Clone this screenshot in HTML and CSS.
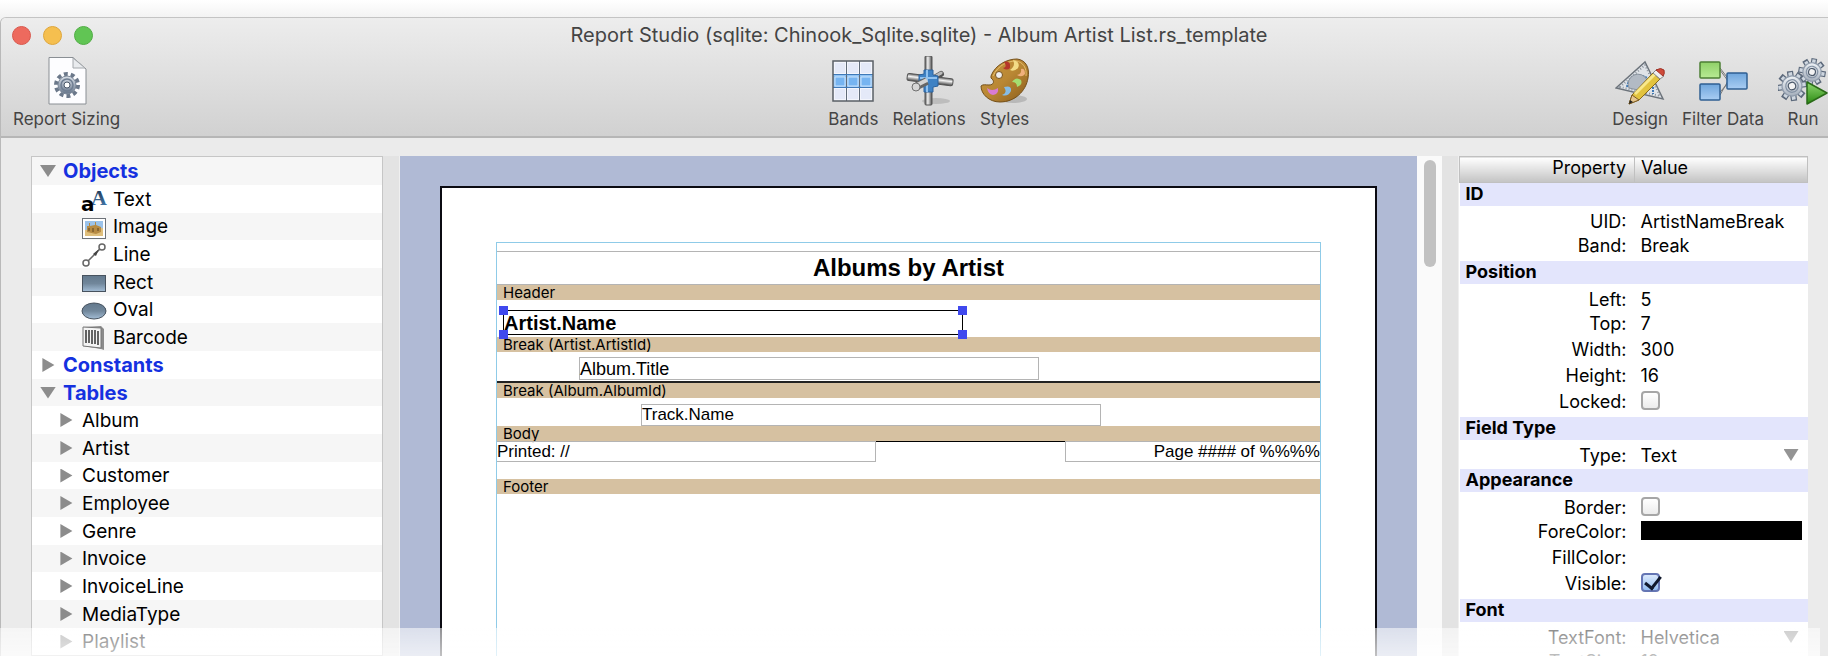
FILE: index.html
```html
<!DOCTYPE html>
<html lang="en">
    <head>
        <meta charset="utf-8">
        <title>Report Studio</title>
        <link rel="stylesheet" href="styles.css">
    </head>
    <body>
        <!-- shared gradients and the gear shape -->
        <svg class="defs" width="0" height="0" aria-hidden="true">
            <defs>
                <linearGradient id="steel" x1="0" y1="0" x2="0" y2="1">
                    <stop offset="0" stop-color="#dbe1e9"/>
                    <stop offset="1" stop-color="#66758a"/>
                </linearGradient>
                <linearGradient id="silver" x1="0" y1="0" x2="0" y2="1">
                    <stop offset="0" stop-color="#eef2f6"/>
                    <stop offset="1" stop-color="#a5afbc"/>
                </linearGradient>
                <linearGradient id="shape" x1="0" y1="0" x2="0" y2="1">
                    <stop offset="0" stop-color="#62788c"/>
                    <stop offset="0.5" stop-color="#71879b"/>
                    <stop offset="1" stop-color="#a3bdd6"/>
                </linearGradient>
                <linearGradient id="tube" x1="0" y1="0" x2="1" y2="0">
                    <stop offset="0" stop-color="#555"/>
                    <stop offset="0.4" stop-color="#f2f2f2"/>
                    <stop offset="1" stop-color="#4c4c4c"/>
                </linearGradient>
                <linearGradient id="tube-flat" x1="0" y1="0" x2="0" y2="1">
                    <stop offset="0" stop-color="#666"/>
                    <stop offset="0.4" stop-color="#f4f4f4"/>
                    <stop offset="1" stop-color="#444"/>
                </linearGradient>
                <linearGradient id="blue" x1="0" y1="0" x2="0" y2="1">
                    <stop offset="0" stop-color="#6fa6dc"/>
                    <stop offset="1" stop-color="#a9cdf3"/>
                </linearGradient>
                <linearGradient id="green" x1="0" y1="0" x2="0" y2="1">
                    <stop offset="0" stop-color="#8fd068"/>
                    <stop offset="1" stop-color="#b8ea94"/>
                </linearGradient>
                <linearGradient id="play" x1="0" y1="0" x2="0" y2="1">
                    <stop offset="0" stop-color="#8fd870"/>
                    <stop offset="1" stop-color="#2b8a12"/>
                </linearGradient>
                <linearGradient id="wood" x1="0" y1="0" x2="1" y2="1">
                    <stop offset="0" stop-color="#c9983f"/>
                    <stop offset="0.5" stop-color="#b98734"/>
                    <stop offset="1" stop-color="#8a5c1c"/>
                </linearGradient>
                <linearGradient id="ink" x1="0" y1="0" x2="0" y2="1">
                    <stop offset="0" stop-color="#16263c"/>
                    <stop offset="1" stop-color="#4a86bd"/>
                </linearGradient>
                <g id="gear">
                    <path d="M0-12V12M-12 0H12M-8-9L8 9M8-9L-8 9" stroke="#5d6a7c" stroke-width="5"/>
                    <path d="M0-11V11M-11 0H11M-7-8L7 8M7-8L-7 8" stroke="#cfd7e0" stroke-width="3"/>
                    <circle r="8" fill="url(#silver)" stroke="#8f9bab"/>
                    <circle r="5" fill="none" stroke="#8593a5"/>
                    <circle r="3" fill="#f3f3f3" stroke="#4d5a6b"/>
                </g>
            </defs>
        </svg>

        <div class="window">
            <header class="chrome">
                <div class="titlebar">
                    <div class="lights">
                        <button class="light close" aria-label="Close"></button>
                        <button class="light minimize" aria-label="Minimize"></button>
                        <button class="light maximize" aria-label="Maximize"></button>
                    </div>
                    <h1 class="title">Report Studio (sqlite: Chinook_Sqlite.sqlite) - Album Artist List.rs_template</h1>
                </div>
                <div class="toolbar">
                    <div class="tools">
                        <button class="tool">
                            <svg width="50" height="50" viewBox="0 0 50 50">
                                <path d="M7 1.500H31L44 13V48H7Z" fill="#fdfdff" stroke="#8a8f94"/>
                                <path d="M31 2V12H43Z" fill="#e9ebee" stroke="#a4a8ac"/>
                                <g fill="none">
                                    <circle cx="25" cy="29" r="11" stroke="#6b788a" stroke-width="4" stroke-dasharray="3.900 3.010"/>
                                    <circle cx="25" cy="29" r="9" fill="url(#steel)" stroke="#7a8798"/>
                                    <circle cx="25" cy="29" r="6" stroke="#6f7e92" stroke-width="1.500"/>
                                    <circle cx="25" cy="29" r="3" fill="#fff" stroke="#4d5a6b"/>
                                </g>
                            </svg>
                            <span>Report Sizing</span>
                        </button>
                    </div>
                    <div class="tools middle">
                        <button class="tool">
                            <svg width="50" height="50" viewBox="0 0 50 50">
                                <rect x="5" y="5" width="40" height="40" fill="#f3f5fc"/>
                                <rect x="5" y="18" width="40" height="14" fill="#8fc3f5"/>
                                <path d="M7 7h10v10h-10zM20 7h10v10h-10zM33 7h10v10h-10zM7 33h10v10h-10zM20 33h10v10h-10zM33 33h10v10h-10z" fill="#e4e9f8"/>
                                <path d="M18.500 5V45M31.500 5V45M5 18.500H45M5 31.500H45" stroke="#5f6a78"/>
                                <path d="M5 18.500H45M5 31.500H45" stroke="#3f79b8"/>
                                <path d="M7 21h10v9h-10zM20 21h10v9h-10zM33 21h10v9h-10z" fill="#76b4f1" stroke="#c9e2fb"/>
                                <rect x="5" y="5" width="40" height="40" fill="none" stroke="#5a5f66" stroke-width="1.500"/>
                            </svg>
                            <span>Bands</span>
                        </button>
                        <button class="tool">
                            <svg width="50" height="50" viewBox="0 0 50 50">
                                <ellipse cx="32" cy="45" rx="14" ry="3" fill="#000" opacity="0.130"/>
                                <path d="M27 24L37 18" stroke="#555" stroke-width="6" stroke-linecap="round"/>
                                <path d="M27 23L37 17" stroke="#bbb" stroke-width="3" stroke-linecap="round"/>
                                <rect x="21" y="0" width="7" height="49" rx="1" fill="url(#tube)" stroke="#555"/>
                                <rect x="3" y="20" width="46" height="7" rx="2" fill="url(#tube-flat)" stroke="#555" transform="rotate(7 25 24)"/>
                                <path d="M20 14H29V19L34 20V30L29 31V36H20V31L15 28V19L20 18Z" fill="#3f82c4" stroke="#2c639e"/>
                                <path d="M23 14V36M16 22H33" stroke="#8fc1ef" stroke-width="2"/>
                                <path d="M23 25L13 30" stroke="#666" stroke-width="8"/>
                                <path d="M23 24L13 29" stroke="#d4d4d4" stroke-width="4"/>
                                <circle cx="12" cy="31" r="4" fill="#d6d6d6" stroke="#707070"/>
                            </svg>
                            <span>Relations</span>
                        </button>
                        <button class="tool">
                            <svg width="50" height="50" viewBox="0 0 50 50">
                                <ellipse cx="33" cy="43" rx="14" ry="4" fill="#000" opacity="0.150"/>
                                <path d="M11 20C15 9 27 3 37 3C46 4 50 12 48 22C46 35 35 46 20 46C9 46 1 38 1 30C3 28 6 29 9 29C14 29 15 25 11 22Z" fill="url(#wood)" stroke="#74501b"/>
                                <path d="M13 20C18 9 28 5 36 5C43 6 47 12 46 20" fill="none" stroke="#e3bd6c"/>
                                <circle cx="19" cy="19" r="3.500" fill="#efefef" stroke="#74501b"/>
                                <path d="M24 6Q31 4 30 12Q27 15 23 12Q28 11 24 6Z" fill="#b5372b"/>
                                <path d="M33 4Q41 6 38 12Q34 16 30 14Q36 10 33 4Z" fill="#f3dc86"/>
                                <path d="M41 13Q45 12 45 18Q42 22 37 19Q42 18 41 13Z" fill="#f0b07c"/>
                                <path d="M32 26Q36 20 41 24Q43 29 37 31Q37 26 32 26Z" fill="#a4dd70"/>
                                <path d="M24 31Q32 29 31 35Q28 41 22 39Q28 37 24 31Z" fill="#86bce6"/>
                                <path d="M7 32Q12 36 18 32Q19 38 13 39Q8 38 7 32Z" fill="#d97bd2"/>
                            </svg>
                            <span>Styles</span>
                        </button>
                    </div>
                    <div class="tools right">
                        <button class="tool">
                            <svg width="50" height="50" viewBox="0 0 50 50">
                                <path d="M1 32L30 6L48 43Z" fill="#dfe3e8" stroke="#6c737b" stroke-width="1.500"/>
                                <path d="M5 31L30 9L45 40Z" fill="none" stroke="#8d959e" stroke-dasharray="1 2" stroke-width="2"/>
                                <path d="M12 31A13 13 0 0 1 37 28" fill="none" stroke="#3f78b4" stroke-width="2" stroke-dasharray="2 1"/>
                                <path d="M14 32A9 9 0 0 1 32 24L23 34Z" fill="#b2bac4" stroke="#88929d"/>
                                <path d="M38 25V38" stroke="#3f78b4" stroke-width="2" stroke-dasharray="2 1"/>
                                <path d="M14 48L17 39L38 17L45 23L24 44Z" fill="#e2c33f" stroke="#87691d"/>
                                <path d="M20 38L40 18" stroke="#f8e88b" stroke-width="3"/>
                                <path d="M14 48L17 39L24 44Z" fill="#e6c690" stroke="#7c5a22"/>
                                <path d="M14 48L15 44L18 46Z" fill="#222"/>
                                <path d="M38 17L42 13L49 20L45 23Z" fill="#eee" stroke="#888"/>
                                <path d="M41 14Q46 11 49 14Q50 18 48 20Z" fill="#cf4a3a" stroke="#9f3327"/>
                            </svg>
                            <span>Design</span>
                        </button>
                        <button class="tool">
                            <svg width="50" height="50" viewBox="0 0 50 50">
                                <path d="M22 14L30 25L22 39M22 12L32 25L22 36" fill="none" stroke="#777"/>
                                <rect x="2" y="6" width="20" height="16" rx="1" fill="url(#green)" stroke="#4c7f34" stroke-width="1.500"/>
                                <rect x="2" y="28" width="20" height="16" rx="1" fill="url(#blue)" stroke="#2f5f92" stroke-width="1.500"/>
                                <rect x="29" y="17" width="20" height="16" rx="1" fill="url(#blue)" stroke="#2f5f92" stroke-width="1.500"/>
                            </svg>
                            <span>Filter Data</span>
                        </button>
                        <button class="tool">
                            <svg width="50" height="50" viewBox="0 0 50 50">
                                <use href="#gear" transform="translate(34 16) rotate(10) scale(1.150)"/>
                                <use href="#gear" transform="translate(14 30) rotate(-8) scale(1.250)"/>
                                <path d="M29 26L49 37L29 48Z" fill="url(#play)" stroke="#2a6b18" stroke-width="1.500" stroke-linejoin="round"/>
                            </svg>
                            <span>Run</span>
                        </button>
                    </div>
                </div>
            </header>

            <main class="panes">
                <ul class="tree">
                    <li class="row group"><button class="arrow open" aria-label="Toggle Objects"></button>Objects</li>
                    <li class="row object">
                        <svg width="26" height="26" viewBox="0 0 26 26">
                            <text x="10" y="19" class="glyph-upper" fill="url(#ink)">A</text>
                            <text x="0" y="25" class="glyph-lower">a</text>
                        </svg>Text
                    </li>
                    <li class="row object">
                        <svg width="26" height="26" viewBox="0 0 26 26">
                            <rect x="1.500" y="4.500" width="23" height="20" fill="#fff" stroke="#6d7278"/>
                            <rect x="4" y="7" width="18" height="15" fill="#9cc3ea"/>
                            <path d="M4 16L22 14V22H4Z" fill="#dfbf7d"/>
                            <path d="M6 18V12H8V9H9V12L14 11V8H15V11L20 13V18L15 20Z" fill="#b78b43"/>
                            <path d="M8 17V14M12 18V14M17 17V14" stroke="#5d4320"/>
                        </svg>Image
                    </li>
                    <li class="row object">
                        <svg width="26" height="26" viewBox="0 0 26 26" fill="none" stroke="#666" stroke-width="1.500">
                            <path d="M7 20L19 8"/>
                            <path d="M12 13L18 8L15 15Z" fill="#444" stroke="none"/>
                            <circle cx="21" cy="6" r="3" fill="#fff"/>
                            <circle cx="5" cy="22" r="3" fill="#fff"/>
                        </svg>Line
                    </li>
                    <li class="row object">
                        <svg width="26" height="26" viewBox="0 0 26 26">
                            <rect x="1.500" y="6.500" width="23" height="16" fill="url(#shape)" stroke="#47525e"/>
                        </svg>Rect
                    </li>
                    <li class="row object">
                        <svg width="26" height="26" viewBox="0 0 26 26">
                            <ellipse cx="13" cy="14" rx="12" ry="8" fill="url(#shape)" stroke="#47525e"/>
                        </svg>Oval
                    </li>
                    <li class="row object">
                        <svg width="26" height="26" viewBox="0 0 26 26">
                            <path d="M2 3L20 2L23 5V26L20 25L2 22Z" fill="#8b8b8b"/>
                            <path d="M2 3L20 4V24L2 22Z" fill="#f4f4f4" stroke="#777"/>
                            <path d="M5 6V19M8 6V19M11 6V20M14 6V20M17 7V21" stroke="#333" stroke-width="1.500"/>
                        </svg>Barcode
                    </li>
                    <li class="row group"><button class="arrow" aria-label="Toggle Constants"></button>Constants</li>
                    <li class="row group"><button class="arrow open" aria-label="Toggle Tables"></button>Tables</li>
                    <li class="row item"><button class="arrow" aria-label="Toggle Album"></button>Album</li>
                    <li class="row item"><button class="arrow" aria-label="Toggle Artist"></button>Artist</li>
                    <li class="row item"><button class="arrow" aria-label="Toggle Customer"></button>Customer</li>
                    <li class="row item"><button class="arrow" aria-label="Toggle Employee"></button>Employee</li>
                    <li class="row item"><button class="arrow" aria-label="Toggle Genre"></button>Genre</li>
                    <li class="row item"><button class="arrow" aria-label="Toggle Invoice"></button>Invoice</li>
                    <li class="row item"><button class="arrow" aria-label="Toggle InvoiceLine"></button>InvoiceLine</li>
                    <li class="row item"><button class="arrow" aria-label="Toggle MediaType"></button>MediaType</li>
                    <li class="row item"><button class="arrow" aria-label="Toggle Playlist"></button>Playlist</li>
                </ul>
                <div class="splitter"></div>

                <div class="canvas">
                    <div class="page">
                        <div class="report">
                            <div class="area heading">
                                <div class="field report-title">Albums by Artist</div>
                            </div>
                            <div class="band">Header</div>
                            <div class="area artist">
                                <div class="field selected">Artist.Name
                                    <i class="handle top left"></i>
                                    <i class="handle top end"></i>
                                    <i class="handle bottom left"></i>
                                    <i class="handle bottom end"></i>
                                </div>
                            </div>
                            <div class="band">Break (Artist.ArtistId)</div>
                            <div class="area album">
                                <div class="field album-title">Album.Title</div>
                            </div>
                            <div class="band">Break (Album.AlbumId)</div>
                            <div class="area track">
                                <div class="field track-name">Track.Name</div>
                            </div>
                            <div class="band">Body</div>
                            <div class="area footer">
                                <div class="field printed">Printed: //</div>
                                <div class="rule"></div>
                                <div class="field page-number">Page #### of %%%%</div>
                            </div>
                            <div class="band">Footer</div>
                        </div>
                    </div>
                </div>
                <div class="scrollbar"><div class="thumb"></div></div>
                <div class="splitter"></div>

                <div class="inspector">
                    <table class="props">
                        <thead>
                            <tr><th class="name">Property</th><th class="value">Value</th></tr>
                        </thead>
                        <tbody>
                            <tr class="section"><th colspan="2">ID</th></tr>
                            <tr><td class="name">UID:</td><td class="value">ArtistNameBreak</td></tr>
                            <tr><td class="name">Band:</td><td class="value">Break</td></tr>
                            <tr class="section"><th colspan="2">Position</th></tr>
                            <tr><td class="name">Left:</td><td class="value">5</td></tr>
                            <tr><td class="name">Top:</td><td class="value">7</td></tr>
                            <tr><td class="name">Width:</td><td class="value">300</td></tr>
                            <tr><td class="name">Height:</td><td class="value">16</td></tr>
                            <tr><td class="name"><label for="locked">Locked:</label></td><td class="value"><input type="checkbox" id="locked"></td></tr>
                            <tr class="section"><th colspan="2">Field Type</th></tr>
                            <tr><td class="name"><label for="type">Type:</label></td><td class="value"><select id="type"><option>Text</option></select></td></tr>
                            <tr class="section"><th colspan="2">Appearance</th></tr>
                            <tr><td class="name"><label for="border">Border:</label></td><td class="value"><input type="checkbox" id="border"></td></tr>
                            <tr><td class="name"><label for="forecolor">ForeColor:</label></td><td class="value"><input type="color" id="forecolor" value="#000000"></td></tr>
                            <tr><td class="name">FillColor:</td><td class="value"></td></tr>
                            <tr><td class="name"><label for="visible">Visible:</label></td><td class="value"><input type="checkbox" id="visible" checked></td></tr>
                            <tr class="section"><th colspan="2">Font</th></tr>
                            <tr><td class="name"><label for="textfont">TextFont:</label></td><td class="value"><select id="textfont"><option>Helvetica</option></select></td></tr>
                            <tr><td class="name">TextSize:</td><td class="value">12</td></tr>
                        </tbody>
                    </table>
                </div>
            </main>
        </div>
        <div class="fade"></div>
    </body>
</html>
```
FILE: styles.css
```css
*{
    box-sizing: border-box;
}
body{
    margin:0;
    height:100vh;
    overflow: hidden;
    display:flex;
    flex-direction: column;
    padding-top:17px;
    background: linear-gradient(#fff, #f3f3f3 17px);
    font-family: Inter, "Liberation Sans", sans-serif;
    color:#000;
}
button{
    font-family: inherit;
    border:none;
    padding:0;
    background: none;
}
.defs{
    position: absolute;
}

/* the window runs a little past the right edge */
.window{
    flex:1;
    min-height:0;
    display:flex;
    flex-direction: column;
    margin-right:-9px;
    border-top:1px solid #c4c4c4;
    border-left:1px solid #b9b9b9;
    border-top-left-radius: 6px;
    background: #ebebeb;
    overflow: hidden;
}
.chrome{
    height:120px;
    flex:none;
    background: linear-gradient(#ededed, #d1d1d1);
    border-bottom:2px solid #b6b6b6;
}
.titlebar{
    display:grid;
    grid-template-columns: 1fr auto 1fr;
    align-items: center;
    height:34px;
}
.lights{
    display:flex;
    gap:12px;
    padding-left:11px;
}
.light{
    width:19px;
    height:19px;
    border-radius: 50%;
}
.close{
    background: #ed6a5e;
    border:1px solid #d9584d;
}
.minimize{
    background: #f5bf4f;
    border:1px solid #dfa63b;
}
.maximize{
    background: #61c554;
    border:1px solid #51ad45;
}
.title{
    margin:0;
    font-size: 20px;
    line-height: 24px;
    font-weight: normal;
    color:#444;
}
.toolbar{
    display:grid;
    grid-template-columns: 1fr auto 1fr;
    padding:4px 0 0 12px;
}
.tools{
    display:flex;
    gap:14px;
}
.middle{
    margin-left:8px;
}
.right{
    justify-content: flex-end;
    margin-right:9px;
}
.tool{
    display:flex;
    flex-direction: column;
    align-items: center;
    gap:3px;
    font-size: 17px;
    line-height: 20px;
    color:#444;
}

.panes{
    flex:1;
    min-height:0;
    display:flex;
    padding:18px 29px 0 30px;
}
.splitter{
    flex:none;
    width:17px;
    background: #e3e3e3;
    border-right:1px solid #efefef;
}

/* tree on the left */
.tree{
    flex:none;
    width:352px;
    margin:0;
    padding:0;
    list-style: none;
    background: #fff;
    border:1px solid #c6c6c6;
    font-size: 19px;
    overflow: hidden;
}
.row{
    display:flex;
    align-items: center;
    height:28px;
}
.row:nth-child(3n){
    height:27px;
}
.row:nth-child(odd){
    background: #f6f6f6;
}
.row svg{
    overflow: visible;
}
.group{
    padding-left:8px;
    gap:7px;
    font-size: 20px;
    font-weight: bold;
    color:#1531e0;
}
.object{
    padding-left:49px;
    gap:6px;
}
.item{
    padding-left:26px;
    gap:8px;
}
.arrow{
    width:16px;
    height:14px;
    background: #8c8c8c;
    clip-path: polygon(15% 0, 90% 50%, 15% 100%);
}
.open{
    height:12px;
    clip-path: polygon(0 0, 100% 0, 50% 100%);
}
.glyph-upper{
    font: bold 22px "Liberation Serif", serif;
}
.glyph-lower{
    font: bold 20px "DejaVu Sans", sans-serif;
}

/* report designer */
.canvas{
    flex:1;
    min-width:0;
    padding:30px 40px 0;
    background: #b0bad5;
    overflow: hidden;
}
.page{
    height:100%;
    padding:54px 54px 0;
    background: #fff;
    border:2px solid #0b0b12;
    border-bottom:none;
}
.report{
    height:100%;
    border:1px solid #8fcbe8;
    border-bottom:none;
    font-family: "Liberation Sans", sans-serif;
}
.band{
    height:15px;
    padding-left:6px;
    background: #d6c1a1;
    font-family: Inter, "Liberation Sans", sans-serif;
    font-size: 15px;
    line-height: 16px;
}
.area{
    display:flex;
    align-items: flex-start;
}
.field{
    border:1px solid #b4b4b4;
    white-space: nowrap;
}
.heading{
    padding-top:8px;
}
.report-title{
    flex:1;
    border-width:1px 0;
    height:34px;
    font-size: 24px;
    line-height: 32px;
    font-weight: bold;
    text-align: center;
}
.artist{
    height:37px;
    padding:10px 6px 0;
}
.selected{
    position: relative;
    width:460px;
    height:25px;
    border-color:#000;
    font-size: 20px;
    line-height: 24px;
    font-weight: bold;
}
.handle{
    position: absolute;
    width:9px;
    height:9px;
    background: #4049ee;
}
.top{
    top:-5px;
}
.bottom{
    bottom:-5px;
}
.left{
    left:-5px;
}
.end{
    right:-5px;
}
.album{
    height:31px;
    padding:5px 0 0 82px;
    border-bottom:2px solid #222;
}
.album-title{
    width:460px;
    height:23px;
    font-size: 18px;
    line-height: 22px;
}
.track{
    height:28px;
    padding:6px 0 0 144px;
}
.track-name{
    width:460px;
    height:22px;
    font-size: 17px;
    line-height: 20px;
}
.footer{
    height:38px;
}
.printed{
    width:46%;
    height:21px;
    border-left:none;
    font-size: 17px;
    line-height: 20px;
}
.rule{
    flex:1;
    border-top:1px solid #000;
}
.page-number{
    width:31%;
    height:21px;
    border-right:none;
    font-size: 17px;
    line-height: 20px;
    text-align: right;
}
.scrollbar{
    flex:none;
    width:25px;
    padding:4px 6px 0 7px;
    background: #fafafa;
}
.thumb{
    height:107px;
    border-radius: 6px;
    background: #c1c1c1;
}

/* property list */
.inspector{
    flex:none;
    width:349px;
    background: #fff;
    overflow: hidden;
}
.props{
    width:100%;
    table-layout: fixed;
    border-collapse: collapse;
    font-size: 18px;
}
.props tr{
    height:26px;
}
.props th, .props td{
    padding:0 6px;
    height:26px;
    line-height: 21px;
    vertical-align: top;
    font-weight: normal;
    text-align: left;
}
.props thead th{
    line-height: 22px;
    background: linear-gradient(#fff, #c3c3c3);
    border:1px solid #c0c0c0;
}
.props .name{
    width:175px;
    text-align: right;
    padding-right:8px;
}
.props .section th{
    font-weight: bold;
    background: #e3e5fc;
    border-bottom:5px solid #fff;
}
.value input, .value select{
    display:block;
    margin:0;
}
input[type=checkbox]{
    appearance: none;
    width:19px;
    height:19px;
    border:2px solid #a6a6a6;
    border-radius: 4px;
    background: linear-gradient(#fff, #ececec);
}
input[type=checkbox]:checked{
    border-color:#6576b4;
    background: linear-gradient(#dbe9fc, #94bdf0);
}
input[type=checkbox]:checked::after{
    content: "";
    display:block;
    width:7px;
    height:13px;
    margin:-2px 0 0 5px;
    border:solid #10182c;
    border-width:0 3px 3px 0;
    transform: rotate(38deg);
}
input[type=color]{
    appearance: none;
    width:100%;
    height:19px;
    padding:0;
    border:none;
    background: #000;
}
input[type=color]::-webkit-color-swatch-wrapper{
    padding:0;
}
input[type=color]::-webkit-color-swatch{
    border:none;
}
select{
    appearance: none;
    width:100%;
    height:21px;
    padding:0;
    border:none;
    background: none;
    font: inherit;
    color:inherit;
}
.value:has(select){
    position: relative;
}
.value:has(select)::after{
    content: "";
    position: absolute;
    top:4px;
    right:9px;
    width:15px;
    height:12px;
    background: #949494;
    clip-path: polygon(0 0, 100% 0, 50% 100%);
    pointer-events: none;
}

/* the bottom of the window fades out */
.fade{
    position: fixed;
    left:0;
    right:8px;
    bottom:0;
    height:28px;
    background: linear-gradient(rgba(255,255,255,0.550), rgba(255,255,255,0.750));
}
```
